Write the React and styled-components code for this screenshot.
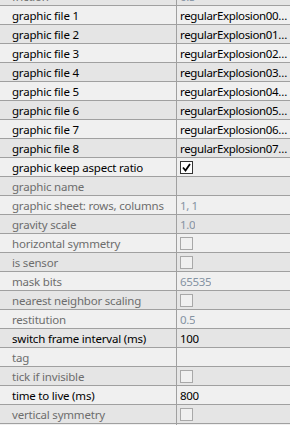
import React from 'react'
import styled, { createGlobalStyle } from 'styled-components'

const Global = createGlobalStyle`
    html, body {
        margin: 0;
        padding: 0;
        background: #f0f0f0;
        overflow: hidden;
    }
    body {
        font-family: "Noto Sans", "DejaVu Sans", sans-serif;
        font-size: 11.5px;
        letter-spacing: -0.2px;
    }
`

const Grid = styled.div`
    margin-top: -13px;
    width: 290px;
`

const Row = styled.div`
    display: grid;
    grid-template-columns: 177px 1fr;
    height: 18px;
    border-bottom: 1px solid #a0a0a0;
    background: ${p => (p.odd ? '#e5e5e5' : '#f0f0f0')};
`

const Label = styled.div`
    padding-left: 12px;
    line-height: 19px;
    white-space: nowrap;
    overflow: hidden;
    color: ${p => (p.disabled ? '#6d6d6d' : '#000')};
    border-right: 1px solid #a0a0a0;
`

const Value = styled.div`
    display: flex;
    align-items: center;
    padding-left: 3px;
    min-width: 0;
    line-height: 19px;
    color: ${p => (p.disabled ? '#8593a3' : '#000')};
`

const Text = styled.span`
    white-space: nowrap;
    overflow: hidden;
    text-overflow: ellipsis;
    letter-spacing: -0.35px;
`

const Box = styled.span`
    display: inline-flex;
    align-items: center;
    justify-content: center;
    width: 11px;
    height: 11px;
    margin-top: 1px;
    border: 1px solid ${p => (p.disabled ? '#a8a8a8' : '#333')};
    background: ${p => (p.disabled ? '#f0f0f0' : '#fff')};
`

const Check = ({ checked, disabled }) => (
    <Box disabled={disabled}>
        {checked && (
            <svg width="9" height="9" viewBox="0 0 9 9">
                <path d="M1 4.5 L3.5 7.5 L8 1" fill="none" stroke="#000" strokeWidth="1.8" />
            </svg>
        )}
    </Box>
)

const rows = [
    { label: 'friction', value: '0.5', disabled: true },
    { label: 'graphic file 1', value: 'regularExplosion00.png' },
    { label: 'graphic file 2', value: 'regularExplosion01.png' },
    { label: 'graphic file 3', value: 'regularExplosion02.png' },
    { label: 'graphic file 4', value: 'regularExplosion03.png' },
    { label: 'graphic file 5', value: 'regularExplosion04.png' },
    { label: 'graphic file 6', value: 'regularExplosion05.png' },
    { label: 'graphic file 7', value: 'regularExplosion06.png' },
    { label: 'graphic file 8', value: 'regularExplosion07.png' },
    { label: 'graphic keep aspect ratio', check: true, checked: true },
    { label: 'graphic name', value: '', disabled: true },
    { label: 'graphic sheet: rows, columns', value: '1, 1', disabled: true },
    { label: 'gravity scale', value: '1.0', disabled: true },
    { label: 'horizontal symmetry', check: true, disabled: true },
    { label: 'is sensor', check: true, disabled: true },
    { label: 'mask bits', value: '65535', disabled: true },
    { label: 'nearest neighbor scaling', check: true, disabled: true },
    { label: 'restitution', value: '0.5', disabled: true },
    { label: 'switch frame interval (ms)', value: '100' },
    { label: 'tag', value: '', disabled: true },
    { label: 'tick if invisible', check: true, disabled: true },
    { label: 'time to live (ms)', value: '800' },
    { label: 'vertical symmetry', check: true, disabled: true },
    { label: '', value: '' },
]

const App = () => (
    <>
        <Global />
        <Grid>
            {rows.map((r, i) => (
                <Row key={i} odd={i % 2 === 0}>
                    <Label disabled={r.disabled}>{r.label}</Label>
                    <Value disabled={r.disabled}>
                        {r.check ? <Check checked={r.checked} disabled={r.disabled} /> : <Text>{r.value}</Text>}
                    </Value>
                </Row>
            ))}
        </Grid>
    </>
)

export default App
